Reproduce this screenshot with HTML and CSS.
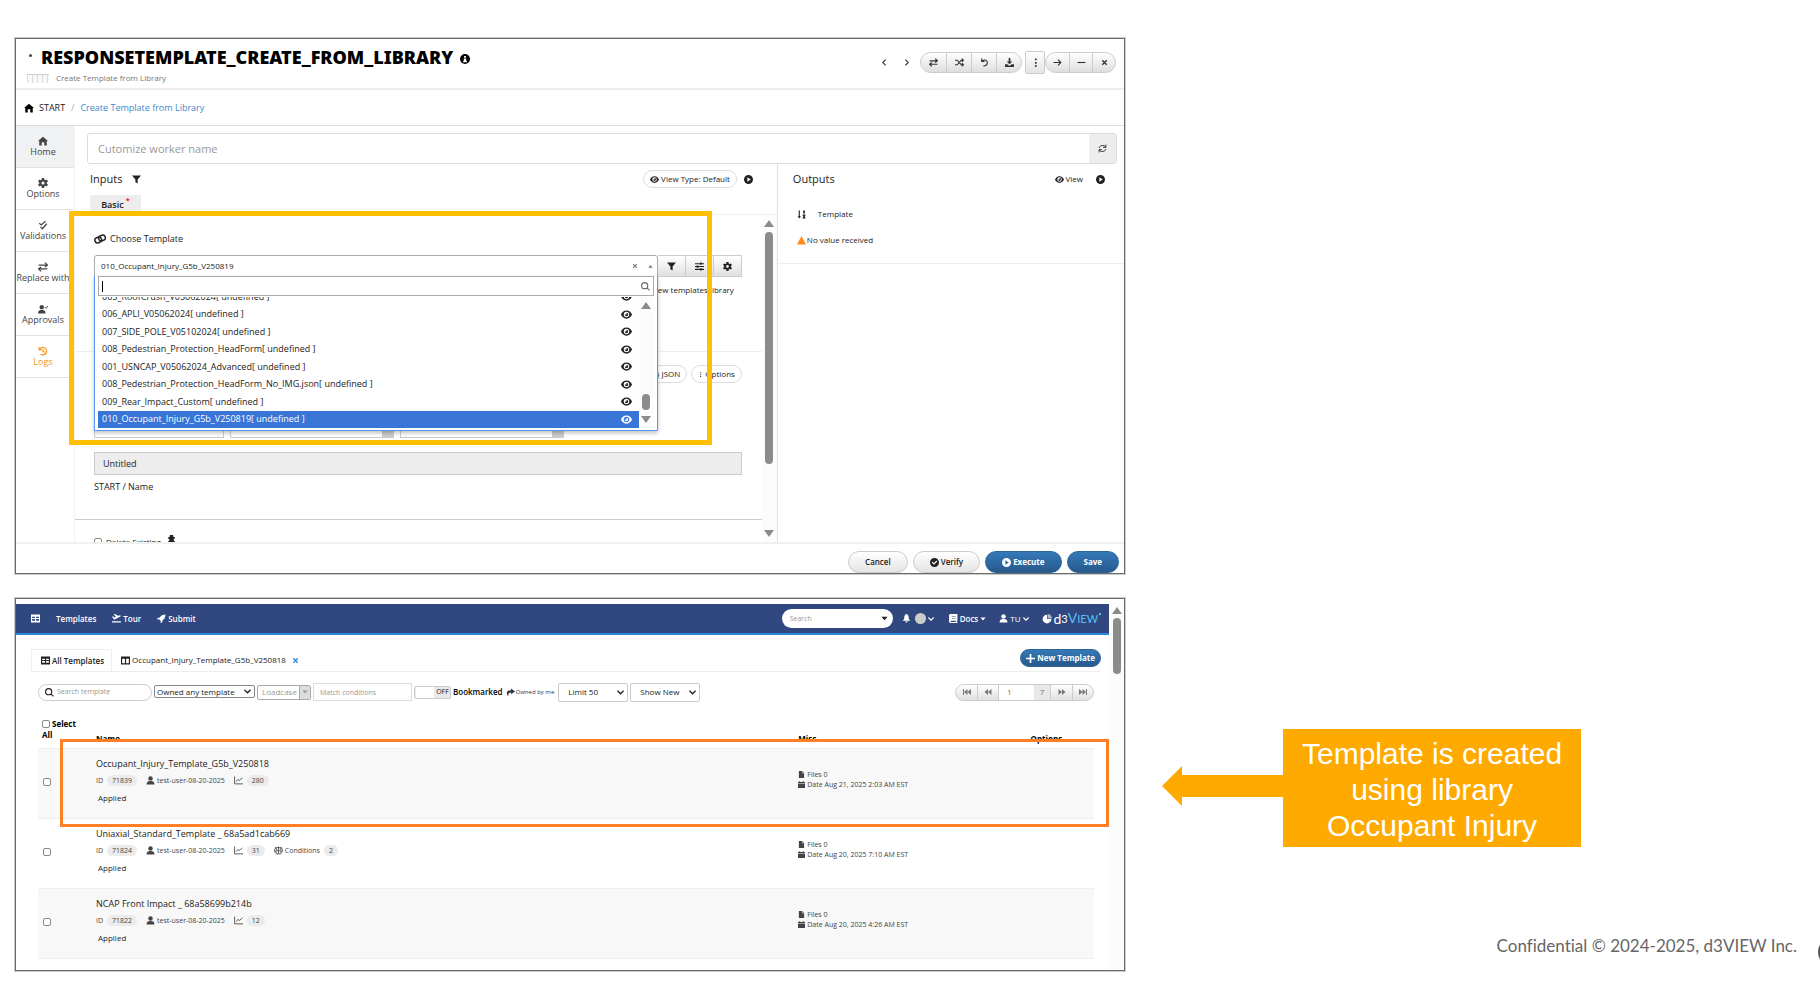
FILE: index.html
```html
<!DOCTYPE html>
<html lang="en">
<head>
    <meta charset="UTF-8">
    <meta name="viewport" content="width=device-width, initial-scale=1.0">
    <title>Create Template from Library</title>
    <link rel="stylesheet" href="styles.css">
</head>
<body>
    <!-- Icon set -->
    <svg class="sprite" width="0" height="0" aria-hidden="true">
        <symbol id="home" viewBox="0 0 16 16"><path d="M8 1 0 8h2v7h4v-5h4v5h4V8h2z"/></symbol>
        <symbol id="gear" viewBox="0 0 16 16"><path fill-rule="evenodd" d="M6 0h4v2.500l2 1 2-1 2 3-2 1.500v2l2 1.500-2 3-2-1-2 1V16H6v-2.500l-2-1-2 1-2-3L2 9V7L0 5.500l2-3 2 1 2-1zM8 5.500a2.500 2.500 0 1 0 0 5 2.500 2.500 0 0 0 0-5z"/></symbol>
        <symbol id="checks" viewBox="0 0 16 16"><path fill="none" stroke="currentColor" stroke-width="2" d="m2 5 3 3 7-6M4 11l3 3 7-8"/></symbol>
        <symbol id="swap" viewBox="0 0 16 16"><path fill="none" stroke="currentColor" stroke-width="2" d="M1 5h13M11 1l4 4-4 3M15 11H2M5 8l-4 3 4 4"/></symbol>
        <symbol id="user" viewBox="0 0 16 16"><circle cx="8" cy="4.500" r="4"/><path d="M1 15c0-4 2-6 7-6s7 2 7 6z"/></symbol>
        <symbol id="usercheck" viewBox="0 0 16 16"><circle cx="6" cy="5" r="3.500"/><path d="M0 15c0-4 2-6 6-6s6 2 6 6z"/><path fill="none" stroke="currentColor" stroke-width="1.500" d="m11 5 2 2 3-4"/></symbol>
        <symbol id="history" viewBox="0 0 16 16"><path fill="none" stroke="currentColor" stroke-width="2" d="M2 2v4h4M2.500 5.500A6 6 0 1 1 4 13M8 5v4l3 1"/></symbol>
        <symbol id="undo" viewBox="0 0 16 16"><path fill="none" stroke="currentColor" stroke-width="2" d="M3 1v5h5M3 6c3-4 10-3 10 2 0 4-3 6-7 6"/></symbol>
        <symbol id="shuffle" viewBox="0 0 16 16"><path fill="none" stroke="currentColor" stroke-width="2" d="M0 4h4l7 8h4M0 12h4l7-8h4M12 1l3 3-3 3M12 9l3 3-3 3"/></symbol>
        <symbol id="download" viewBox="0 0 16 16"><path d="M6.500 0h3v6H13l-5 5-5-5h3.500z"/><path d="M0 11h4l4 3 4-3h4v5H0z"/></symbol>
        <symbol id="dots" viewBox="0 0 16 16"><path d="M7 1h3v3H7zM7 7h3v3H7zM7 13h3v3H7z"/></symbol>
        <symbol id="arrow" viewBox="0 0 16 16"><path fill="none" stroke="currentColor" stroke-width="2" d="M1 8h13M9 3l5 5-5 5"/></symbol>
        <symbol id="minus" viewBox="0 0 16 16"><path d="M1 7h14v2H1z"/></symbol>
        <symbol id="cross" viewBox="0 0 16 16"><path fill="none" stroke="currentColor" stroke-width="3" d="m3 3 10 10M13 3 3 13"/></symbol>
        <symbol id="left" viewBox="0 0 16 16"><path fill="none" stroke="currentColor" stroke-width="2" d="m10 3-5 5 5 5"/></symbol>
        <symbol id="right" viewBox="0 0 16 16"><path fill="none" stroke="currentColor" stroke-width="2" d="m6 3 5 5-5 5"/></symbol>
        <symbol id="down" viewBox="0 0 16 16"><path fill="none" stroke="currentColor" stroke-width="3" d="m1 4 7 7 7-7"/></symbol>
        <symbol id="caret" viewBox="0 0 16 16"><path d="M1 4h14l-7 8z"/></symbol>
        <symbol id="caretup" viewBox="0 0 16 16"><path d="M1 12h14L8 3z"/></symbol>
        <symbol id="info" viewBox="0 0 16 16"><path fill-rule="evenodd" d="M8 0a8 8 0 1 0 0 16A8 8 0 0 0 8 0zM6.500 3h3v3h-3zM6 7h4v4h1v2H5v-2h1z"/></symbol>
        <symbol id="refresh" viewBox="0 0 16 16"><path fill="none" stroke="currentColor" stroke-width="1.500" d="M14 1v5H9M14 5.500C11 1 3 2 2 7M2 15v-5h5M2 10.500C5 15 13 14 14 9"/></symbol>
        <symbol id="filter" viewBox="0 0 16 16"><path d="M0 1h16l-6 7v7l-4-2V8z"/></symbol>
        <symbol id="eye" viewBox="0 0 16 16"><path fill-rule="evenodd" d="M8 2C4 2 1 5 0 8c1 3 4 6 8 6s7-3 8-6c-1-3-4-6-8-6zm0 2a4 4 0 1 0 0 8 4 4 0 0 0 0-8z"/><path d="M8 5.500V8H5.500A2.500 2.500 0 1 0 8 5.500z"/></symbol>
        <symbol id="play" viewBox="0 0 16 16"><path fill-rule="evenodd" d="M8 0a8 8 0 1 0 0 16A8 8 0 0 0 8 0zM6 4l6 4-6 4z"/></symbol>
        <symbol id="check" viewBox="0 0 16 16"><path fill-rule="evenodd" d="M8 0a8 8 0 1 0 0 16A8 8 0 0 0 8 0zM3 8l1.500-1.500L7 9l4.500-4.500L13 6l-6 6z"/></symbol>
        <symbol id="link" viewBox="0 0 16 16"><g fill="none" stroke="currentColor" stroke-width="2"><rect x="1" y="6" width="9" height="7" rx="3.500" transform="rotate(-20 5 9)"/><rect x="6" y="3" width="9" height="7" rx="3.500" transform="rotate(-20 11 6)"/></g></symbol>
        <symbol id="sliders" viewBox="0 0 16 16"><path d="M0 2h16v2H0zM0 7h16v2H0zM0 12h16v2H0zM9 1h3v4H9zM3 6h3v4H3zM9 11h3v4H9z"/></symbol>
        <symbol id="search" viewBox="0 0 16 16"><path fill="none" stroke="currentColor" stroke-width="2" d="M6.500 1a5.500 5.500 0 1 0 0 11 5.500 5.500 0 0 0 0-11zM10.500 10.500 15 15"/></symbol>
        <symbol id="sort" viewBox="0 0 16 16"><path d="M3 1h2v10h2l-3 4-3-4h2zM11 1h3v5h-3zM10 8h5v2h-1v3h1v2h-5v-2h1v-3h-1z"/></symbol>
        <symbol id="warn" viewBox="0 0 16 16"><path d="M8 0 16 15H0z"/></symbol>
        <symbol id="table" viewBox="0 0 16 16"><path fill-rule="evenodd" d="M0 1h16v14H0zM2 5v2h5V5zm7 0v2h5V5zM2 9v3h5V9zm7 0v3h5V9z"/></symbol>
        <symbol id="columns" viewBox="0 0 16 16"><path fill-rule="evenodd" d="M0 1h16v14H0zM2 5v8h5V5zm7 0v8h5V5z"/></symbol>
        <symbol id="plane" viewBox="0 0 16 16"><path d="M0 13h16v2H0zM0 5l2-1 2 2 3-1-4-4 2-1 6 3 3-1c2 0 2 2 0 3L4 10z"/></symbol>
        <symbol id="send" viewBox="0 0 16 16"><path d="M15 1C10 1 7 3 5 6L1 7l-1 3 3-1 4 4-1 3 3-1 1-4c3-2 5-5 5-10z"/></symbol>
        <symbol id="bell" viewBox="0 0 16 16"><path d="M8 0c3 1 4 4 4 7 0 2 1 3 3 5H1c2-2 3-3 3-5 0-3 1-6 4-7zM6 13h4c0 3-4 3-4 0z"/></symbol>
        <symbol id="book" viewBox="0 0 16 16"><path fill-rule="evenodd" d="M3 0h12v12h-1v2h1v2H3c-3 0-3-3-3-4V3c0-2 1-3 3-3zm2 4v1h7V4zm0 3v1h7V7zm-2 5v2h9v-2z"/></symbol>
        <symbol id="pie" viewBox="0 0 16 16"><path d="M8 1v7h7a7 7 0 1 1-7-7z"/><path opacity=".6" d="M9 0c4 0 7 3 7 7H9z"/></symbol>
        <symbol id="plus" viewBox="0 0 16 16"><path d="M6.500 0h3v6.500H16v3H9.500V16h-3V9.500H0v-3h6.500z"/></symbol>
        <symbol id="share" viewBox="0 0 16 16"><path d="M9 1l7 5-7 5V8C5 8 4 10 4 15c-4-5-4-11 5-11z"/></symbol>
        <symbol id="back" viewBox="0 0 16 16"><path d="M0 2h2v12H0zM9 2v12L2 8zM16 2v12L9 8z"/></symbol>
        <symbol id="rewind" viewBox="0 0 16 16"><path d="M8 2v12L1 8zM15 2v12L8 8z"/></symbol>
        <symbol id="forward" viewBox="0 0 16 16"><path d="M1 2v12l7-6zM8 2v12l7-6z"/></symbol>
        <symbol id="end" viewBox="0 0 16 16"><path d="M14 2h2v12h-2zM7 2v12l7-6zM0 2v12l7-6z"/></symbol>
        <symbol id="chart" viewBox="0 0 16 16"><path fill="none" stroke="currentColor" stroke-width="1.500" d="M1 1v13h15M4 10l3-4 3 2 5-5"/></symbol>
        <symbol id="scale" viewBox="0 0 16 16"><path fill="none" stroke="currentColor" stroke-width="1.500" d="M2 3h12M8 1v13M3 14h10M0 9l3-6 3 6zM10 9l3-6 3 6zM1 11h4M11 11h4"/></symbol>
        <symbol id="file" viewBox="0 0 16 16"><path d="M2 0h7v5h5v11H2zM10 0l4 4h-4z"/></symbol>
        <symbol id="calendar" viewBox="0 0 16 16"><path d="M0 2h3V0h2v2h6V0h2v2h3v3H0zM0 6h16v10H0z"/></symbol>
        <symbol id="bug" viewBox="0 0 16 16"><path d="M5 0h6v3l3 1v2l-2 1v3l2 1v2H2v-2l2-1V7L2 6V4l3-1z"/></symbol>
    </svg>

    <main class="slide">
        <!-- Worker dialog -->
        <section class="shot worker">
            <header class="worker-head">
                <div>
                    <h1><span class="bullet"></span>RESPONSETEMPLATE_CREATE_FROM_LIBRARY <svg class="icon"><use href="#info"/></svg></h1>
                    <p class="worker-sub"><span class="thumb"></span>Create Template from Library</p>
                </div>
                <div class="worker-tools">
                    <button class="plain" aria-label="Previous"><svg class="icon"><use href="#left"/></svg></button>
                    <button class="plain" aria-label="Next"><svg class="icon"><use href="#right"/></svg></button>
                    <div class="group">
                        <button aria-label="Swap"><svg class="icon"><use href="#swap"/></svg></button>
                        <button aria-label="Shuffle"><svg class="icon"><use href="#shuffle"/></svg></button>
                        <button aria-label="Undo"><svg class="icon"><use href="#undo"/></svg></button>
                        <button aria-label="Download"><svg class="icon"><use href="#download"/></svg></button>
                    </div>
                    <button class="more" aria-label="More"><svg class="icon"><use href="#dots"/></svg></button>
                    <div class="group narrow">
                        <button aria-label="Dock"><svg class="icon"><use href="#arrow"/></svg></button>
                        <button aria-label="Minimize"><svg class="icon"><use href="#minus"/></svg></button>
                        <button aria-label="Close"><svg class="icon small"><use href="#cross"/></svg></button>
                    </div>
                </div>
            </header>
            <nav class="crumbs">
                <svg class="icon"><use href="#home"/></svg>
                <span>START</span>
                <span class="slash">/</span>
                <a href="#">Create Template from Library</a>
            </nav>
            <div class="worker-body">
                <nav class="side">
                    <a href="#" class="active"><svg class="icon"><use href="#home"/></svg>Home</a>
                    <a href="#"><svg class="icon"><use href="#gear"/></svg>Options</a>
                    <a href="#"><svg class="icon"><use href="#checks"/></svg>Validations</a>
                    <a href="#"><svg class="icon"><use href="#swap"/></svg>Replace with</a>
                    <a href="#"><svg class="icon"><use href="#usercheck"/></svg>Approvals</a>
                    <a href="#" class="logs"><svg class="icon"><use href="#history"/></svg>Logs</a>
                </nav>
                <div class="worker-main">
                    <div class="name-row">
                        <input type="text" placeholder="Cutomize worker name" aria-label="Worker name">
                        <button aria-label="Refresh"><svg class="icon"><use href="#refresh"/></svg></button>
                    </div>
                    <div class="panes">
                        <div class="inputs">
                            <div class="pane-head">
                                <h2>Inputs</h2>
                                <svg class="icon"><use href="#filter"/></svg>
                                <button class="outline push"><svg class="icon"><use href="#eye"/></svg>View Type: Default</button>
                                <button class="plain" aria-label="Run"><svg class="icon"><use href="#play"/></svg></button>
                            </div>
                            <div class="tabs"><button class="tab">Basic<sup>*</sup></button></div>
                            <div class="scroller">
                                <div class="form">
                                    <div class="block choose">
                                        <label class="field-label" for="template"><svg class="icon"><use href="#link"/></svg>Choose Template</label>
                                        <div class="choose-row">
                                            <div class="picker">
                                                <button class="picked" id="template">010_Occupant_Injury_G5b_V250819
                                                    <svg class="icon clear"><use href="#cross"/></svg>
                                                    <svg class="icon"><use href="#caretup"/></svg>
                                                </button>
                                                <div class="drop">
                                                    <div class="drop-search">
                                                        <span class="cursor"></span>
                                                        <input type="text" aria-label="Filter templates">
                                                        <svg class="icon"><use href="#search"/></svg>
                                                    </div>
                                                    <div class="drop-body">
                                                        <div class="drop-list">
                                                            <ul>
                                                                <li>005_RoofCrush_V05062024[ undefined ]<svg class="icon"><use href="#eye"/></svg></li>
                                                                <li>006_APLI_V05062024[ undefined ]<svg class="icon"><use href="#eye"/></svg></li>
                                                                <li>007_SIDE_POLE_V05102024[ undefined ]<svg class="icon"><use href="#eye"/></svg></li>
                                                                <li>008_Pedestrian_Protection_HeadForm[ undefined ]<svg class="icon"><use href="#eye"/></svg></li>
                                                                <li>001_USNCAP_V05062024_Advanced[ undefined ]<svg class="icon"><use href="#eye"/></svg></li>
                                                                <li>008_Pedestrian_Protection_HeadForm_No_IMG.json[ undefined ]<svg class="icon"><use href="#eye"/></svg></li>
                                                                <li>009_Rear_Impact_Custom[ undefined ]<svg class="icon"><use href="#eye"/></svg></li>
                                                                <li class="selected">010_Occupant_Injury_G5b_V250819[ undefined ]<svg class="icon"><use href="#eye"/></svg></li>
                                                            </ul>
                                                        </div>
                                                        <div class="bar"><i class="up"></i><i class="handle low"></i><i class="dn"></i></div>
                                                    </div>
                                                </div>
                                            </div>
                                            <div class="picker-tools">
                                                <button aria-label="Filter"><svg class="icon"><use href="#filter"/></svg></button>
                                                <button aria-label="Adjust"><svg class="icon"><use href="#sliders"/></svg></button>
                                                <button aria-label="Settings"><svg class="icon"><use href="#gear"/></svg></button>
                                            </div>
                                        </div>
                                        <a class="library" href="#">View templates library</a>
                                    </div>
                                    <div class="block source">
                                        <div class="pills">
                                            <button class="outline">{ } JSON</button>
                                            <button class="outline"><svg class="icon dots"><use href="#dots"/></svg>Options</button>
                                        </div>
                                        <div class="boxes">
                                            <span class="box">Process Workers</span>
                                            <span class="box combo"></span>
                                            <span class="box combo"></span>
                                        </div>
                                        <div class="untitled">Untitled</div>
                                        <p class="path">START / Name</p>
                                    </div>
                                    <div class="block delete">
                                        <label><input type="checkbox">Delete Existing</label>
                                        <svg class="icon"><use href="#bug"/></svg>
                                    </div>
                                </div>
                                <div class="bar outer"><i class="up"></i><i class="handle"></i><i class="dn"></i></div>
                            </div>
                        </div>
                        <div class="outputs">
                            <div class="pane-head">
                                <h2>Outputs</h2>
                                <button class="plain push"><svg class="icon"><use href="#eye"/></svg>View</button>
                                <button class="plain" aria-label="Run"><svg class="icon"><use href="#play"/></svg></button>
                            </div>
                            <div class="result">
                                <p class="result-name"><svg class="icon"><use href="#sort"/></svg>Template</p>
                                <p class="result-none"><svg class="icon"><use href="#warn"/></svg>No value received</p>
                            </div>
                        </div>
                    </div>
                </div>
            </div>
            <footer class="worker-foot">
                <button class="round">Cancel</button>
                <button class="round"><svg class="icon"><use href="#check"/></svg>Verify</button>
                <button class="round primary"><svg class="icon"><use href="#play"/></svg>Execute</button>
                <button class="round primary">Save</button>
            </footer>
            <div class="mark mark-choose"></div>
        </section>

        <!-- Templates list -->
        <section class="shot templates">
            <div class="list-page">
                <nav class="topbar">
                    <a href="#" aria-label="Apps"><svg class="icon"><use href="#table"/></svg></a>
                    <a href="#">Templates</a>
                    <a href="#"><svg class="icon"><use href="#plane"/></svg>Tour</a>
                    <a href="#"><svg class="icon"><use href="#send"/></svg>Submit</a>
                    <div class="top-search">
                        <input type="text" placeholder="Search" aria-label="Search">
                        <svg class="icon"><use href="#caret"/></svg>
                    </div>
                    <div class="top-right">
                        <svg class="icon"><use href="#bell"/></svg>
                        <a href="#" class="avatar" aria-label="Account"><span></span><svg class="icon"><use href="#down"/></svg></a>
                        <a href="#"><svg class="icon"><use href="#book"/></svg>Docs<svg class="icon small"><use href="#caret"/></svg></a>
                        <a href="#" class="tu"><svg class="icon"><use href="#user"/></svg>TU<svg class="icon small"><use href="#down"/></svg></a>
                        <a href="#" class="logo"><svg class="icon"><use href="#pie"/></svg>d<small>3</small><b>V<small>IEW</small></b><i></i></a>
                    </div>
                </nav>
                <div class="list-tabs">
                    <a href="#" class="current"><svg class="icon"><use href="#table"/></svg>All Templates</a>
                    <a href="#"><svg class="icon"><use href="#columns"/></svg>Occupant_Injury_Template_G5b_V250818<svg class="icon close"><use href="#cross"/></svg></a>
                    <button class="round primary new"><svg class="icon"><use href="#plus"/></svg>New Template</button>
                </div>
                <div class="filters">
                    <div class="find"><svg class="icon"><use href="#search"/></svg><input type="text" placeholder="Search template" aria-label="Search template"></div>
                    <div class="pick owned"><select aria-label="Owner"><option>Owned any template</option></select><svg class="icon"><use href="#down"/></svg></div>
                    <button class="loadcase"><span>Loadcase</span><i><svg class="icon"><use href="#caret"/></svg></i></button>
                    <input class="match" type="text" placeholder="Match conditions" aria-label="Match conditions">
                    <button class="toggle" aria-label="Bookmarked off"><span></span>OFF</button>
                    <b class="bookmarked">Bookmarked</b>
                    <a href="#" class="owned-link"><svg class="icon"><use href="#share"/></svg>Owned by me</a>
                    <div class="pick"><select aria-label="Limit"><option>Limit 50</option></select><svg class="icon"><use href="#down"/></svg></div>
                    <div class="pick"><select aria-label="Show"><option>Show New</option></select><svg class="icon"><use href="#down"/></svg></div>
                    <div class="pager">
                        <button aria-label="First"><svg class="icon"><use href="#back"/></svg></button>
                        <button aria-label="Previous"><svg class="icon"><use href="#rewind"/></svg></button>
                        <input type="text" value="1" aria-label="Page">
                        <span>7</span>
                        <button aria-label="Next"><svg class="icon"><use href="#forward"/></svg></button>
                        <button aria-label="Last"><svg class="icon"><use href="#end"/></svg></button>
                    </div>
                </div>
                <table>
                    <thead>
                        <tr>
                            <th class="c-check"><label><input type="checkbox">Select All</label></th>
                            <th class="c-name">Name</th>
                            <th class="c-misc">Misc</th>
                            <th>Options</th>
                        </tr>
                    </thead>
                    <tbody>
                        <tr>
                            <td><input type="checkbox" aria-label="Select 71839"></td>
                            <td>
                                <a class="title" href="#">Occupant_Injury_Template_G5b_V250818</a>
                                <div class="meta"><span>ID <em>71839</em></span><span><svg class="icon"><use href="#user"/></svg>test-user-08-20-2025</span><span><svg class="icon"><use href="#chart"/></svg> <em>280</em></span></div>
                                <div class="state">Applied</div>
                            </td>
                            <td class="misc"><div><svg class="icon"><use href="#file"/></svg>Files 0</div><div><svg class="icon"><use href="#calendar"/></svg>Date Aug 21, 2025 2:03 AM EST</div></td>
                            <td></td>
                        </tr>
                        <tr>
                            <td><input type="checkbox" aria-label="Select 71824"></td>
                            <td>
                                <a class="title" href="#">Uniaxial_Standard_Template _ 68a5ad1cab669</a>
                                <div class="meta"><span>ID <em>71824</em></span><span><svg class="icon"><use href="#user"/></svg>test-user-08-20-2025</span><span><svg class="icon"><use href="#chart"/></svg> <em>31</em></span><span><svg class="icon"><use href="#scale"/></svg>Conditions <em>2</em></span></div>
                                <div class="state">Applied</div>
                            </td>
                            <td class="misc"><div><svg class="icon"><use href="#file"/></svg>Files 0</div><div><svg class="icon"><use href="#calendar"/></svg>Date Aug 20, 2025 7:10 AM EST</div></td>
                            <td></td>
                        </tr>
                        <tr>
                            <td><input type="checkbox" aria-label="Select 71822"></td>
                            <td>
                                <a class="title" href="#">NCAP Front Impact _ 68a58699b214b</a>
                                <div class="meta"><span>ID <em>71822</em></span><span><svg class="icon"><use href="#user"/></svg>test-user-08-20-2025</span><span><svg class="icon"><use href="#chart"/></svg> <em>12</em></span></div>
                                <div class="state">Applied</div>
                            </td>
                            <td class="misc"><div><svg class="icon"><use href="#file"/></svg>Files 0</div><div><svg class="icon"><use href="#calendar"/></svg>Date Aug 20, 2025 4:26 AM EST</div></td>
                            <td></td>
                        </tr>
                        <tr>
                            <td></td>
                            <td><a class="title" href="#">Direct Assistant</a></td>
                            <td></td>
                            <td></td>
                        </tr>
                    </tbody>
                </table>
            </div>
            <div class="bar page-bar"><i class="up"></i><i class="handle"></i></div>
            <div class="mark mark-row"></div>
        </section>

        <!-- Caption -->
        <aside class="caption">
            <div class="callout">
                <svg class="pointer" viewBox="0 0 121 40"><path d="M0 20 20 0v9h101v22H20v9z"/></svg>
                <p>Template is created using library Occupant Injury</p>
            </div>
            <p class="legal">Confidential © 2024-2025, d3VIEW Inc.</p>
            <span class="page-dot"></span>
        </aside>
    </main>
</body>
</html>
```
FILE: styles.css
```css
* {
    box-sizing: border-box;
}
body {
    margin: 0;
    background: #fff;
    color: #222;
    font: 9px/14px "Open Sans", "Noto Sans", sans-serif;
    overflow-x: hidden;
}
h1, h2, p, ul {
    margin: 0;
    padding: 0;
    font-weight: normal;
}
a {
    color: inherit;
    text-decoration: none;
}
button, input, select {
    font: inherit;
    color: inherit;
    margin: 0;
    padding: 0;
    border: 0;
    background: none;
    border-radius: 0;
    outline: none;
}
button {
    display: flex;
    align-items: center;
    justify-content: center;
    gap: 2px;
    white-space: nowrap;
}
.sprite {
    position: absolute;
}
.icon {
    width: 9px;
    height: 9px;
    flex: none;
    fill: currentColor;
}
.icon.small {
    width: 7px;
    height: 7px;
}
input[type="checkbox"] {
    appearance: none;
    width: 8px;
    height: 8px;
    border: 1px solid #888;
    border-radius: 2px;
    background: #fff;
    vertical-align: middle;
}

/* Slide */
.slide {
    display: grid;
    grid-template-columns: 61.5% 1fr;
    gap: 24px 0;
    padding: 38px 0 11px 15px;
}
.shot {
    position: relative;
    border: 1px solid #6a6a6a;
    box-shadow: 0 0 0 1px #ccc;
    overflow: hidden;
}
.mark {
    position: absolute;
    pointer-events: none;
}

/* Scrollbars */
.bar {
    width: 15px;
    flex: none;
    display: flex;
    flex-direction: column;
    align-items: center;
    background: #fcfcfc;
}
.bar .up, .bar .dn {
    border: 5px solid transparent;
    border-top-width: 0;
    border-bottom: 7px solid #8b8b8b;
}
.bar .dn {
    border-bottom-width: 0;
    border-top: 7px solid #8b8b8b;
    margin-top: auto;
}
.bar .handle {
    width: 8px;
    border-radius: 4px;
    background: #8b8b8b;
}

/* Worker */
.worker {
    grid-column: 1;
    height: 536px;
}
.worker-head {
    display: flex;
    justify-content: space-between;
    height: 51px;
    padding: 6px 8px 0 11px;
    border-bottom: 2px solid #ececec;
}
h1 {
    display: flex;
    align-items: center;
    color: #000;
    font: 900 18px/24px "Noto Sans", sans-serif;
}
h1 .icon {
    width: 10px;
    height: 10px;
    margin: 3px 0 0 7px;
}
.bullet {
    width: 3px;
    height: 3px;
    margin: 0 9px 3px 2px;
    border-radius: 50%;
    background: #444;
}
.worker-sub {
    display: flex;
    align-items: center;
    color: #777;
    font-size: 8px;
    line-height: 18px;
}
.thumb {
    width: 22px;
    height: 9px;
    margin-right: 7px;
    border-top: 1px solid #ccc;
    background: repeating-linear-gradient(90deg, #ddd 0 1px, #f8f8f8 1px 5px);
}
.worker-tools {
    display: flex;
    align-items: center;
    height: 34px;
    color: #333;
}
.plain {
    width: 22px;
}
.group {
    display: flex;
    height: 21px;
    margin: 0 3px;
    border: 1px solid #ccc;
    border-radius: 11px;
    background: linear-gradient(#fff, #dedede);
}
.group button {
    width: 25px;
    border-left: 1px solid #ccc;
}
.group button:first-child {
    border-left: 0;
}
.group.narrow {
    margin: 0;
}
.group.narrow button {
    width: 23px;
}
.more {
    width: 20px;
    height: 23px;
    border: 1px solid #ccc;
    border-radius: 2px;
    background: linear-gradient(#fff, #e4e4e4);
}
.crumbs {
    display: flex;
    align-items: center;
    gap: 6px;
    height: 36px;
    padding-left: 8px;
    border-bottom: 1px solid #ddd;
}
.crumbs .icon {
    width: 10px;
    height: 10px;
    margin-right: -1px;
    fill: #000;
}
.crumbs .slash {
    color: #aaa;
}
.crumbs a {
    color: #3b8bd0;
}
.worker-body {
    display: flex;
    height: 418px;
    border-bottom: 2px solid #f0f0f0;
}
.side {
    width: 59px;
    flex: none;
    border-right: 1px solid #f2f2f2;
}
.side a {
    display: flex;
    flex-direction: column;
    align-items: center;
    height: 42px;
    padding: 10px 4px 0 0;
    border-bottom: 1px solid #e2e2e2;
    color: #444;
    line-height: 12px;
    white-space: nowrap;
}
.side .icon {
    width: 10px;
    height: 10px;
}
.side .active {
    background: #f0f1f3;
}
.side .logs {
    color: #f7941d;
}
.worker-main {
    flex: 1;
    padding-top: 7px;
    min-width: 0;
}
.name-row {
    display: flex;
    height: 31px;
    margin: 0 7px 0 12px;
    border: 1px solid #ddd;
    border-radius: 3px;
}
.name-row input {
    flex: 1;
    padding: 0 10px;
    font-size: 11px;
}
input::placeholder {
    color: #999;
    opacity: 1;
}
.name-row button {
    width: 27px;
    background: #ededed;
}
.panes {
    display: grid;
    grid-template-columns: 67% 1fr;
}
.pane-head {
    display: flex;
    align-items: center;
    height: 30px;
    padding: 0 17px 0 15px;
    white-space: nowrap;
}
.pane-head h2 {
    margin-right: 10px;
    font-size: 11px;
}
.pane-head .plain {
    width: auto;
    margin-left: 13px;
    font-size: 8px;
    font-weight: 500;
}
.pane-head .push {
    margin-left: auto;
}
.outline {
    height: 18px;
    padding: 0 6px;
    border: 1px solid #ddd;
    border-radius: 9px;
    background: #fff;
    font-size: 8px;
    font-weight: 500;
}
.inputs {
    border-right: 1px solid #e0e0e0;
}
.inputs .pane-head {
    padding-right: 24px;
}
.inputs .pane-head .outline + .plain {
    margin-left: 7px;
}
.tabs {
    height: 21px;
    padding: 1px 0 0 15px;
    border-bottom: 1px solid #f0f0f0;
}
.tab {
    width: 51px;
    height: 19px;
    background: #ededed;
    font-weight: 600;
}
.tab sup {
    color: #f00;
    line-height: 1;
    margin-bottom: 8px;
}
.scroller {
    display: flex;
    height: 327px;
    overflow: hidden;
}
.form {
    flex: 1;
    min-width: 0;
}
.block {
    padding: 0 20px 0 19px;
    border-bottom: 1px solid #eee;
}
.choose {
    height: 137px;
    padding-top: 17px;
}
.field-label {
    display: flex;
    align-items: center;
    gap: 4px;
}
.field-label .icon {
    width: 12px;
    height: 12px;
}
.choose-row {
    display: flex;
    height: 22px;
    margin-top: 9px;
}
.picker {
    position: relative;
    flex: 1;
}
.picked {
    width: 100%;
    height: 22px;
    padding: 0 4px 0 6px;
    justify-content: flex-start;
    border: 1px solid #aaa;
    border-radius: 3px 3px 0 0;
    font-size: 8px;
    font-weight: 500;
}
.picked .icon {
    width: 5px;
    height: 5px;
    color: #777;
}
.picked .clear {
    width: 6px;
    height: 6px;
    margin: 0 8px 0 auto;
}
.drop {
    position: absolute;
    z-index: 2;
    top: 21px;
    left: 0;
    right: 0;
    height: 155px;
    padding: 0 3px;
    border: 1px solid #5897fb;
    border-top: 0;
    background: #fff;
    box-shadow: 0 2px 4px rgba(0, 0, 0, 0.25);
}
.drop-search {
    display: flex;
    align-items: center;
    height: 20px;
    padding: 0 3px;
    border: 1px solid #aaa;
    color: #666;
}
.drop-search input {
    flex: 1;
}
.cursor {
    width: 1px;
    height: 11px;
    background: #000;
}
.drop-body {
    display: flex;
    height: 132px;
    padding-top: 1px;
}
.drop-list {
    flex: 1;
    display: flex;
    align-items: flex-end;
    overflow: hidden;
}
.drop-list ul {
    display: flex;
    flex-direction: column;
    flex: 1;
    height: 140px;
    list-style: none;
}
.drop-list li {
    flex: 1;
    display: flex;
    align-items: center;
    justify-content: space-between;
    padding: 0 7px 0 4px;
}
.drop-list .icon {
    width: 11px;
    height: 11px;
}
.drop-list .selected {
    background: #3875d7;
    color: #fff;
}
.drop .bar {
    padding: 5px 0;
}
.drop .low {
    margin-top: auto;
    height: 16px;
}
.drop .dn {
    margin-top: 6px;
}
.picker-tools {
    display: flex;
}
.picker-tools button {
    width: 28px;
    border: 1px solid #ccc;
    border-left: 0;
    background: linear-gradient(#fff, #e0e0e0);
}
.library {
    display: block;
    margin: 6px 8px 0 0;
    text-align: right;
    font-size: 8px;
    font-weight: 500;
}
.source {
    height: 168px;
    padding-top: 13px;
    border-bottom-color: #ccc;
}
.pills {
    display: flex;
    justify-content: flex-end;
    gap: 4px;
}
.pills .dots {
    width: 5px;
}
.boxes {
    display: flex;
    gap: 6px;
    margin-top: 33px;
}
.box {
    width: 130px;
    height: 22px;
    padding: 4px 13px 0;
    border: 1px solid #ccc;
}
.combo {
    width: 164px;
    border-right: 12px solid #ccc;
}
.untitled {
    height: 23px;
    margin-top: 14px;
    padding: 0 8px;
    border: 1px solid #ccc;
    background: #ededed;
    line-height: 21px;
}
.path {
    margin-top: 5px;
}
.delete {
    display: flex;
    gap: 6px;
    padding-top: 15px;
    font-size: 8px;
}
.delete label {
    display: flex;
    align-items: center;
    gap: 4px;
}
.outer {
    padding: 5px 0;
}
.outer .handle {
    height: 232px;
    margin-top: 5px;
}
.outputs .pane-head {
    padding-right: 19px;
}
.result {
    height: 70px;
    padding: 13px 19px 0;
    border-bottom: 1px solid #eee;
    font-size: 8px;
}
.result-name, .result-none {
    display: flex;
    align-items: center;
}
.result-name {
    gap: 12px;
    margin-bottom: 12px;
}
.result-none {
    gap: 1px;
}
.result-none .icon {
    fill: #ff8c1a;
}
.worker-foot {
    display: flex;
    justify-content: flex-end;
    gap: 5px;
    padding: 7px 5px 0;
}
.round {
    height: 22px;
    padding: 0 16px;
    border: 1px solid #ccc;
    border-radius: 11px;
    background: linear-gradient(#fff, #e4e4e4);
    font-size: 8px;
    font-weight: 600;
}
.primary {
    border-color: #2a6496;
    background: linear-gradient(#3579b8, #27598c);
    color: #fff;
    font-weight: 700;
}
.mark-choose {
    top: 172px;
    left: 53px;
    width: 58%;
    height: 234px;
    border: 5px solid #ffc000;
    z-index: 3;
}

/* Templates */
.templates {
    grid-column: 1;
    display: flex;
    height: 373px;
    padding-top: 5px;
}
.list-page {
    flex: 1;
    min-width: 0;
}
.topbar {
    display: flex;
    align-items: center;
    gap: 16px;
    height: 31px;
    padding: 0 8px 0 15px;
    border-bottom: 2px solid #2b88dd;
    background: #30477f;
    color: #fff;
    font-size: 8px;
    font-weight: 600;
    white-space: nowrap;
}
.topbar a {
    display: flex;
    align-items: center;
    gap: 2px;
}
.top-search {
    display: flex;
    align-items: center;
    width: 111px;
    height: 19px;
    margin-left: auto;
    padding: 0 5px 0 8px;
    border-radius: 10px;
    background: #fff;
    color: #222;
    font-weight: 400;
}
.top-search input {
    flex: 1;
    min-width: 0;
    font-size: 7px;
}
.top-search .icon {
    width: 7px;
    height: 7px;
}
.top-right {
    display: flex;
    align-items: center;
    gap: 13px;
    margin-left: -7px;
}
.avatar {
    margin: 0 2px 0 -9px;
}
.avatar span {
    width: 11px;
    height: 11px;
    border-radius: 50%;
    background: #ccc;
}
.avatar .icon {
    width: 6px;
    height: 6px;
}
.tu {
    font-weight: 400;
}
.topbar .icon.small {
    width: 6px;
    height: 6px;
}
.topbar .logo {
    gap: 0;
    font: 14px/20px Lato, sans-serif;
}
.logo .icon {
    width: 10px;
    height: 10px;
    margin-right: 2px;
}
.logo small {
    font-size: 11px;
}
.logo b {
    color: #55c0f5;
    font-weight: 400;
}
.logo i {
    width: 2px;
    height: 2px;
    margin: 0 0 9px 1px;
    background: #55c0f5;
}
.list-tabs {
    display: flex;
    height: 37px;
    margin: 0 8px 0 15px;
    padding-top: 14px;
    border-bottom: 1px solid #eee;
    font-size: 8px;
}
.list-tabs a {
    display: flex;
    align-items: center;
    gap: 2px;
    padding: 0 9px;
}
.list-tabs .current {
    padding: 0 7px 0 9px;
    border: 1px solid #eee;
    border-bottom: 0;
    font-weight: 600;
}
.list-tabs .close {
    width: 7px;
    height: 7px;
    margin-left: 4px;
    color: #2b88dd;
}
.new {
    height: 18px;
    margin-left: auto;
    padding: 0 5px;
}
.filters {
    display: flex;
    align-items: center;
    gap: 2px;
    margin: 10px 15px 0 22px;
    height: 20px;
    font-size: 8px;
    white-space: nowrap;
}
.find {
    display: flex;
    align-items: center;
    gap: 3px;
    width: 114px;
    height: 17px;
    padding-left: 6px;
    border: 1px solid #ccc;
    border-radius: 9px;
}
.find input {
    width: 90px;
    font-size: 7px;
}
.pick {
    position: relative;
}
.pick select {
    appearance: none;
    width: 70px;
    height: 19px;
    padding-left: 9px;
    border: 1px solid #ccc;
    border-radius: 2px;
    background: #fff;
    font-size: 8px;
}
.pick .icon {
    position: absolute;
    top: 6px;
    right: 4px;
    width: 7px;
    height: 7px;
}
.pick.owned select {
    width: 101px;
    height: 13px;
    padding-left: 2px;
    border-color: #888;
    line-height: 11px;
}
.owned .icon {
    top: 3px;
}
.loadcase {
    width: 54px;
    height: 15px;
    padding-left: 4px;
    gap: 0;
    justify-content: space-between;
    border: 1px solid #aaa;
    border-radius: 2px;
    color: #999;
}
.loadcase i {
    display: flex;
    align-items: center;
    height: 100%;
    padding: 0 2px;
    border-left: 1px solid #aaa;
    background: #ddd;
}
.loadcase .icon {
    width: 6px;
    height: 6px;
}
.match {
    width: 99px;
    height: 18px;
    padding-left: 6px;
    border: 1px solid #ddd;
    font-size: 7px;
}
.toggle {
    width: 37px;
    height: 13px;
    border: 1px solid #ccc;
    border-radius: 2px;
    background: #e8e8e8;
    font-size: 7px;
}
.toggle span {
    width: 18px;
    height: 11px;
    background: #fff;
}
.bookmarked {
    color: #000;
    font-weight: 600;
}
.owned-link {
    display: flex;
    align-items: center;
    gap: 1px;
    margin: 0 2px 0 1px;
    color: #334;
    font-size: 6px;
}
.pager {
    display: flex;
    height: 17px;
    margin-left: auto;
    border: 1px solid #ccc;
    border-radius: 9px;
    background: linear-gradient(#fff, #e0e0e0);
    color: #777;
}
.pager button {
    width: 21px;
}
.pager button + button {
    border-left: 1px solid #ccc;
}
.pager .icon {
    width: 8px;
    height: 8px;
}
.pager input {
    width: 36px;
    padding-left: 8px;
    border-left: 1px solid #ccc;
    background: #fff;
    color: #b5651d;
}
.pager span {
    width: 17px;
    border-right: 1px solid #ccc;
    background: #e8e8e8;
    text-align: center;
}
table {
    width: calc(100% - 37px);
    margin: 14px 0 0 22px;
    border-collapse: collapse;
    table-layout: fixed;
}
th, td {
    padding: 0 4px;
    text-align: left;
}
th {
    height: 32px;
    padding-bottom: 4px;
    color: #000;
    font-size: 8px;
    line-height: 11px;
    vertical-align: bottom;
}
.c-check {
    width: 54px;
    padding-bottom: 8px;
}
.c-check input {
    margin-right: 2px;
}
.c-name {
    width: 66.5%;
}
.c-misc {
    width: 22%;
}
tbody tr {
    height: 70px;
    border-top: 1px solid #eee;
}
tbody tr:nth-child(odd) {
    background: #f8f8f8;
}
td {
    padding-top: 8px;
    vertical-align: top;
}
td > input {
    margin: 21px 0 0 1px;
}
.meta {
    display: flex;
    gap: 9px;
    margin-top: 3px;
    color: #444;
    font-size: 7px;
}
.meta span, .misc div {
    display: flex;
    align-items: center;
    gap: 2px;
}
.meta em {
    margin-left: 2px;
    padding: 0 5px;
    border-radius: 6px;
    background: #ebebeb;
    font-style: normal;
    line-height: 11px;
}
.state {
    margin: 3px 0 0 2px;
    font-size: 8px;
}
.misc {
    padding-top: 21px;
    color: #444;
    font-size: 7px;
    line-height: 10px;
}
.misc .icon {
    width: 7px;
    height: 7px;
}
.page-bar {
    padding-top: 3px;
}
.page-bar .handle {
    height: 56px;
    margin-top: 4px;
}
.mark-row {
    top: 140px;
    left: 44px;
    right: 15px;
    height: 88px;
    border: 3px solid #ff7f27;
}

/* Caption */
.caption {
    grid-column: 2;
    grid-row: 2;
    position: relative;
    display: flex;
    flex-direction: column;
    padding: 131px 23px 13px 37px;
    overflow: hidden;
}
.callout {
    display: flex;
    align-items: center;
}
.pointer {
    width: 121px;
    height: 40px;
    margin-bottom: 5px;
    fill: #fa0;
}
.callout p {
    width: 298px;
    padding: 7px 16px 3px;
    background: #fa0;
    color: #fff;
    font: 30px/36px "Liberation Sans", Arial, sans-serif;
    text-align: center;
}
.legal {
    margin-top: auto;
    color: #666;
    font: 17px/24px Lato, sans-serif;
    font-variant-ligatures: none;
    text-align: right;
}
.page-dot {
    position: absolute;
    right: -28px;
    bottom: 4px;
    width: 30px;
    height: 30px;
    border-radius: 50%;
    background: #555;
}
```
